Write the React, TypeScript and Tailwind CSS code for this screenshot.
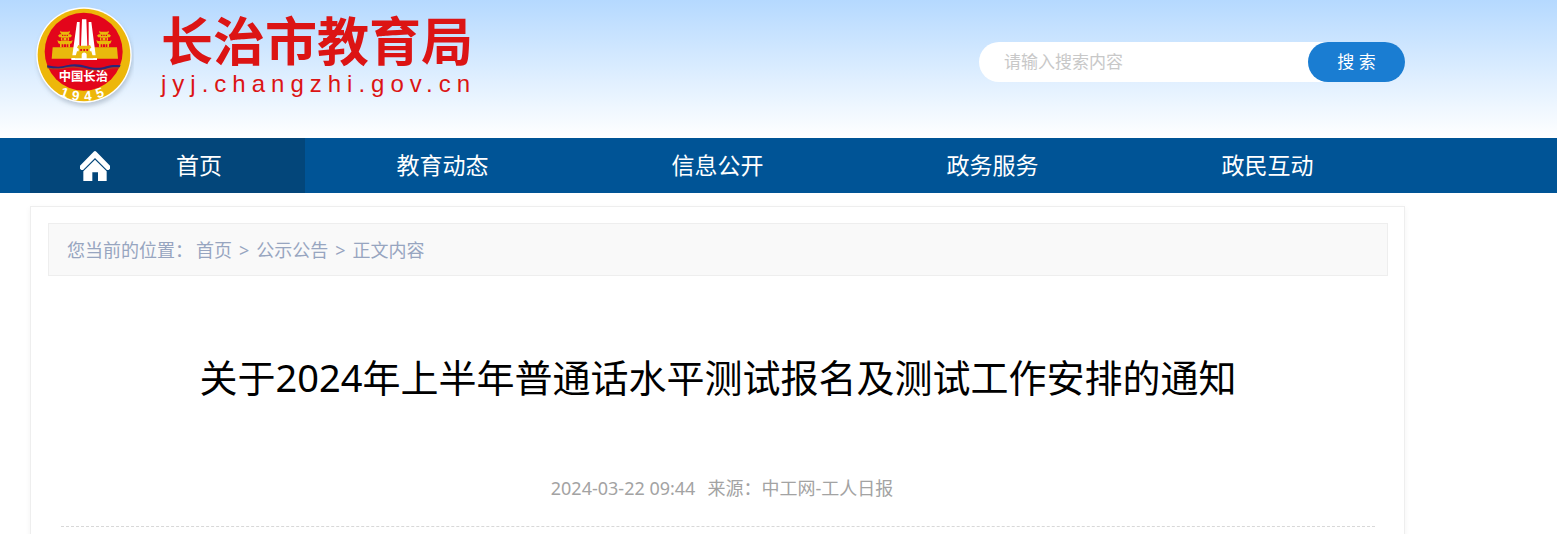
const navItems = ["首页", "教育动态", "信息公开", "政务服务", "政民互动"];

const crumbs = ["首页", "公示公告", "正文内容"];

const yearDigits = [
  { digit: "1", x: 87, y: 273, angle: 20 },
  { digit: "9", x: 123, y: 283, angle: 8 },
  { digit: "4", x: 163, y: 284, angle: -6 },
  { digit: "5", x: 202, y: 274, angle: -20 },
];

const cjk = "font-['Noto_Sans','Noto_Sans_CJK_SC',sans-serif]";

function Tower({ x }: { x: number }) {
  return (
    <g transform={`translate(${x} -18)`}>
      <g fill="#e9b90c">
        <path d="M-14 92l4 3h20l4-3v6l-4 5h6l5 4-4 5h-34l-4-5 5-4h6l-4-5z" />
        <path d="M-12 112h24v10h-24z" />
        <path d="M-23 121l6 2h34l6-2-3 9-5 2v10h-30v-10l-5-2z" />
        <path d="M-37 142h76l3 34h-82z" />
      </g>
      <path
        d="M-9 104h4v4h-4zM-2 104h4v4h-4zM5 104h4v4h-4zM-8 114h4v7h-4zM4 114h4v7h-4zM-10 133h5v8h-5zM-3 133h6v8h-6zM5 133h5v8h-5z"
        fill="#e3051b"
      />
    </g>
  );
}

function Emblem() {
  return (
    <svg viewBox="0 0 300 320" className="h-auto w-[100px] shrink-0" role="img" aria-label="中国长治 1945">
      <defs>
        <filter id="shade" x="-10%" y="-10%" width="120%" height="130%">
          <feDropShadow dx="3" dy="10" stdDeviation="6" floodColor="#64748b" floodOpacity="0.35" />
        </filter>
      </defs>
      <circle cx="150" cy="147" r="143" fill="#fff" filter="url(#shade)" />
      <circle cx="150" cy="147" r="139" fill="#edb70a" />
      <circle cx="149" cy="137" r="117" fill="#e3051b" />
      <Tower x={93} />
      <Tower x={210} />
      {/* monument between the two gate towers */}
      <path
        d="M144 40h13l4 106h-21zM129 48h8l-1 88-9 12h-12zM164 48h8l13 100h-12l-9-12zM112 156h77v6h-77z"
        fill="#fff"
      />
      <path d="M133 117l5 2h25l5-2 4 8-5 3v8h5l6 21h-55l6-21h5v-8l-5-3z" fill="#e9b90c" />
      <path d="M139 129h5v6h-5zM148 129h5v6h-5zM157 129h5v6h-5z" fill="#e3051b" />
      <path d="M143 160v-13a7 7 0 0 1 15 0v13z" fill="#fff" />
      <path
        d="M39 178c25 5 40 6 60 0 22-6 40-3 60 3 22 6 40 6 58 0 15-5 28-5 43-3l-3 6c-17-1-27 0-40 4-19 5-38 5-60-1-22-6-38-8-58-3-24 6-38 4-59 1z"
        fill="#29277a"
      />
      <path
        d="M40 186c25 5 42 3 62-2 22-3 38 3 58 8 22 4 40 3 56-2 15-5 26-5 40-4"
        fill="none"
        stroke="#8a6a22"
        strokeWidth="2"
      />
      <text
        x="148"
        y="224"
        fill="#fff"
        fontSize="37"
        fontWeight="700"
        textAnchor="middle"
        fontFamily="Noto Sans CJK SC, sans-serif"
      >
        中国长治
      </text>
      {yearDigits.map(({ digit, x, y, angle }) => (
        <text
          key={digit}
          transform={`translate(${x} ${y}) rotate(${angle})`}
          fill="#fff"
          fontSize="41"
          fontWeight="700"
          textAnchor="middle"
          fontFamily="Liberation Sans, sans-serif"
        >
          {digit}
        </text>
      ))}
    </svg>
  );
}

function HomeIcon() {
  return (
    <svg viewBox="0 0 90 90" className="size-[30px]" fill="#fff" aria-hidden="true">
      <path d="M41 2q4-4 8 0L90 44v9l-4 4h-5L45 21 9 57H4l-4-4v-9z" />
      <path d="M45 26 80 61v29H54V64H37v26H10V61z" />
    </svg>
  );
}

function Header() {
  return (
    <header className="bg-linear-to-b from-[#b5d9ff] to-white">
      <div className="ml-[30px] flex h-[138px] max-w-[1375px] items-start justify-between">
        <a href="#" className="flex pt-[6px] pl-[4px]">
          <Emblem />
          <div className="ml-[27px] pt-[6px] text-[#dc1414]">
            <div className="font-['Noto_Sans_CJK_SC',sans-serif] text-[52px] leading-[54px] font-bold">
              长治市教育局
            </div>
            <div className="font-['Liberation_Sans',sans-serif] text-[24px] leading-[36px] tracking-[6px]">
              jyj.changzhi.gov.cn
            </div>
          </div>
        </a>
        <form className="mt-[42px] flex h-10 w-[426px] rounded-full bg-white" onSubmit={(e) => e.preventDefault()}>
          <input
            type="text"
            aria-label="请输入搜索内容"
            placeholder="请输入搜索内容"
            className="min-w-0 flex-1 pl-[25px] text-[17px] outline-none placeholder:text-[#c8c8c8]"
          />
          <button type="submit" className="w-[97px] rounded-full bg-[#1a7dd2] text-[17px] text-white">
            搜 索
          </button>
        </form>
      </div>
    </header>
  );
}

function Nav() {
  return (
    <nav className="bg-[#005496]">
      <ul className="ml-[30px] grid h-[55px] max-w-[1375px] grid-cols-5 text-[23px] text-white">
        {navItems.map((item, i) => (
          <li key={item}>
            {i === 0 ? (
              <a href="#" className="flex h-full items-center gap-[66px] bg-[#03467a] pl-[50px]">
                <HomeIcon />
                {item}
              </a>
            ) : (
              <a href="#" className="flex h-full items-center justify-center">
                {item}
              </a>
            )}
          </li>
        ))}
      </ul>
    </nav>
  );
}

function Breadcrumb() {
  return (
    <div className="flex h-[53px] items-center border border-[#eee] bg-[#f9f9f9] px-[18px] pt-[2px] text-[18px] text-[#97a5c0]">
      <span className="mr-[3px]">您当前的位置：</span>
      {crumbs.map((crumb, i) => (
        <span key={crumb}>
          {i > 0 && <span className="mx-[7px]">&gt;</span>}
          <a href="#">{crumb}</a>
        </span>
      ))}
    </div>
  );
}

export default function App() {
  return (
    <div className={`h-screen overflow-hidden bg-white ${cjk}`}>
      <Header />
      <Nav />
      <main className="mt-[13px] ml-[30px] h-full max-w-[1375px] border border-[#eee] px-4 pt-4 pl-[17px] shadow-[0_2px_6px_rgba(0,0,0,0.05)]">
        <Breadcrumb />
        <article className="px-[13px]">
          <h1 className="pt-[73px] text-center text-[38px] leading-[56px] text-black">
            关于2024年上半年普通话水平测试报名及测试工作安排的通知
          </h1>
          <div className="mt-[70px] flex justify-center gap-[12px] border-b border-dashed border-[#d8d8d8] pb-[24px] pl-2 text-[18px] leading-[27px] text-[#a3a3a3]">
            <span>2024-03-22 09:44</span>
            <span>来源：中工网-工人日报</span>
          </div>
        </article>
      </main>
    </div>
  );
}
